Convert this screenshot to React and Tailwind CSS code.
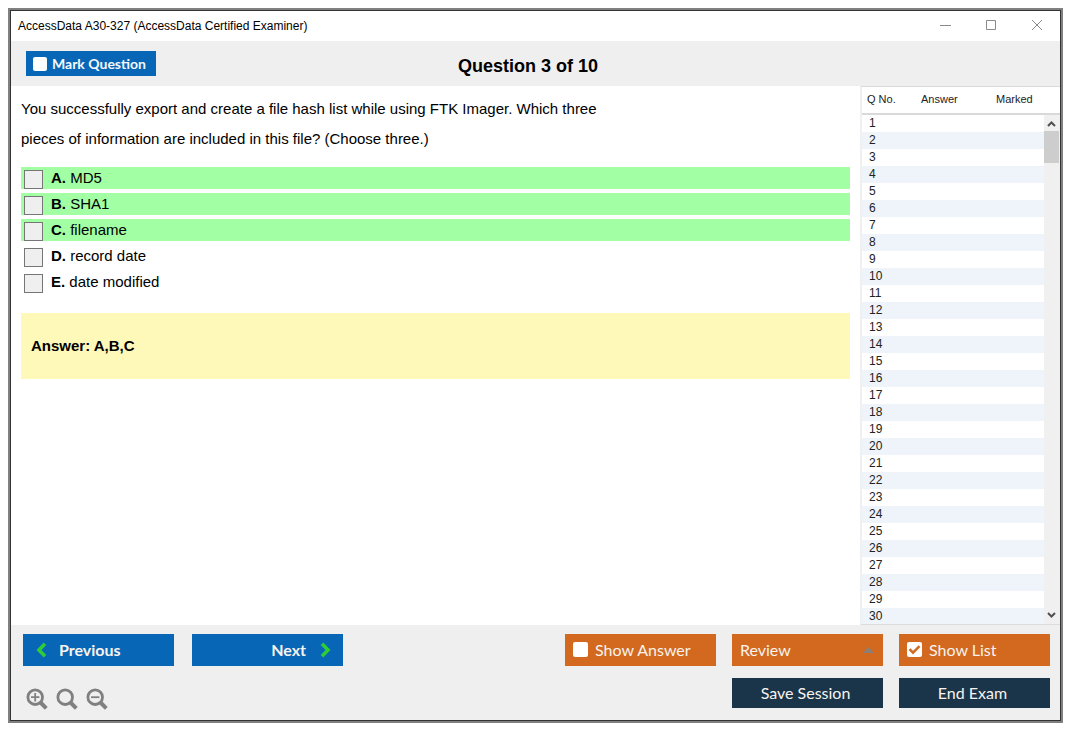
import React from "react";

const options = [
  { letter: "A", text: "MD5", correct: true },
  { letter: "B", text: "SHA1", correct: true },
  { letter: "C", text: "filename", correct: true },
  { letter: "D", text: "record date", correct: false },
  { letter: "E", text: "date modified", correct: false },
];

const rows = Array.from({ length: 30 }, (_, i) => i + 1);

function TitleBar() {
  return (
    <div className="flex h-[30px] shrink-0 items-center justify-between bg-white pr-[17px] pl-[7px]">
      <h1 className="text-[12px] leading-4">AccessData A30-327 (AccessData Certified Examiner)</h1>
      <div className="flex items-center gap-[34px] pb-px text-[#8a8a8a]">
        <button type="button" aria-label="Minimize">
          <svg className="block size-3" viewBox="0 0 12 12" fill="none" stroke="currentColor" aria-hidden="true">
            <path d="M1 5.5h11" />
          </svg>
        </button>
        <button type="button" aria-label="Maximize">
          <svg className="block size-3" viewBox="0 0 12 12" fill="none" stroke="currentColor" aria-hidden="true">
            <path d="M1.5 0.5h9v9h-9z" />
          </svg>
        </button>
        <button type="button" aria-label="Close">
          <svg className="block size-3" viewBox="0 0 12 12" fill="none" stroke="currentColor" aria-hidden="true">
            <path d="M1 0l10 10M11 0L1 10" />
          </svg>
        </button>
      </div>
    </div>
  );
}

function Tick({ checked = false, small = false }) {
  return (
    <span className={small ? "grid size-[14px]" : "mb-px grid size-[15px]"}>
      <input
        type="checkbox"
        defaultChecked={checked}
        className="peer col-start-1 row-start-1 size-full appearance-none rounded-[2px] bg-white"
      />
      <svg
        className="pointer-events-none invisible col-start-1 row-start-1 size-full text-[#d2691e] peer-checked:visible"
        viewBox="0 0 15 15"
        fill="none"
        stroke="currentColor"
        strokeWidth="2.4"
        aria-hidden="true"
      >
        <path d="M2.500 7.200l3.500 3.500 6.500-6.500" />
      </svg>
    </span>
  );
}

function QuestionList() {
  return (
    <aside className="flex w-[200px] shrink-0 overflow-hidden border-y border-b-[#dcdcdc] border-t-[#d9d9d9] border-l-2 border-l-[#f0f0f0] text-[12px] text-[#222]">
      <div className="min-w-0 flex-1 overflow-hidden">
        <table className="w-full table-fixed border-separate border-spacing-0 text-left">
          <thead>
            <tr className="h-[28px]">
              <th scope="col" className="w-[54px] border-b-2 border-[#d9d9d9] pb-[2px] pl-[5px] text-[11px] font-normal">Q No.</th>
              <th scope="col" className="w-[75px] border-b-2 border-[#d9d9d9] pb-[2px] pl-[5px] text-[11px] font-normal">Answer</th>
              <th scope="col" className="border-b-2 border-[#d9d9d9] pb-[2px] pl-[5px] text-[11px] font-normal">Marked</th>
            </tr>
          </thead>
          <tbody>
            {rows.map((n) => (
              <tr key={n} className="h-[17px] odd:bg-white even:bg-[#eef4f9]">
                <td className="pl-[7px] text-[12px] leading-[17px]">{n}</td>
                <td />
                <td />
              </tr>
            ))}
          </tbody>
        </table>
      </div>
      <div className="flex w-[16px] flex-col" aria-hidden="true">
        <div className="h-[28px] shrink-0 border-b-2 border-[#d9d9d9]" />
        <div className="flex min-h-0 flex-1 flex-col justify-between bg-[#f0f0f0]">
          <div>
            <svg className="h-4 w-[15px]" viewBox="0 0 15 16" fill="none" stroke="#505050" strokeWidth="2">
              <path d="M4 11l3.500-3.500L11 11" />
            </svg>
            <div className="h-8 w-[15px] bg-[#cdcdcd]" />
          </div>
          <svg className="h-4 w-[15px]" viewBox="0 0 15 16" fill="none" stroke="#505050" strokeWidth="2">
            <path d="M4 5l3.500 3.500L11 5" />
          </svg>
        </div>
      </div>
    </aside>
  );
}

function Magnifier({ label, d }) {
  return (
    <button type="button" aria-label={label}>
      <svg className="block size-[22px] text-[#808080]" viewBox="0 0 22 22" fill="none" stroke="currentColor" aria-hidden="true">
        <circle cx="9.2" cy="9.2" r="7.300" strokeWidth="2.800" />
        <path d="M14.500 14.500l5.800 5.800" strokeWidth="4" />
        <path d={d} strokeWidth="1.800" />
      </svg>
    </button>
  );
}

function Footer() {
  return (
    <footer className="flex shrink-0 justify-between bg-[#efefef] pt-[9px] pr-[10px] pb-[10px] pl-3 font-['Lato',sans-serif] text-[16px] leading-5 text-[#f7f3ee]">
      <div className="flex flex-col gap-[22px]">
        <div className="flex gap-[18px]">
          <button type="button" className="flex h-8 w-[151px] items-center gap-3 bg-[#0766b5] pl-[13px] font-bold">
            <svg className="h-4 w-[11px]" viewBox="0 0 11 16" fill="none" stroke="#2fcc38" strokeWidth="3.600" aria-hidden="true">
              <path d="M9 1.800L3 8 9 14.200" />
            </svg>
            Previous
          </button>
          <button type="button" className="flex h-8 w-[151px] items-center justify-end gap-[14px] bg-[#0766b5] pr-3 font-bold">
            Next
            <svg className="h-4 w-[11px]" viewBox="0 0 11 16" fill="none" stroke="#2fcc38" strokeWidth="3.600" aria-hidden="true">
              <path d="M2 1.800L8 8 2 14.200" />
            </svg>
          </button>
        </div>
        <div className="flex gap-2 pl-[3px]">
          <Magnifier label="Zoom in" d="M9.200 5v8.400M5 9.200h8.400" />
          <Magnifier label="Reset zoom" d="" />
          <Magnifier label="Zoom out" d="M5 9.200h8.400" />
        </div>
      </div>
      <div className="grid grid-cols-[151px_151px_151px] content-start gap-x-4 gap-y-3">
        <label className="flex h-8 items-center gap-[7px] bg-[#d2691e] pl-2">
          <Tick />
          Show Answer
        </label>
        <button type="button" className="flex h-8 items-center justify-between bg-[#d2691e] pr-[9px] pl-2">
          Review
          <svg className="h-[6px] w-[11px]" viewBox="0 0 11 6" fill="#8a8078" aria-hidden="true">
            <path d="M5.500 0L11 6H0z" />
          </svg>
        </button>
        <label className="flex h-8 items-center gap-[7px] bg-[#d2691e] pl-2">
          <Tick checked />
          Show List
        </label>
        <button type="button" className="col-start-2 h-[30px] bg-[#1a344a] pr-1">Save Session</button>
        <button type="button" className="h-[30px] bg-[#1a344a] pr-1">End Exam</button>
      </div>
    </footer>
  );
}

export default function App() {
  return (
    <div className="h-screen bg-white pt-2 pr-3 pb-3 pl-2 font-['Liberation_Sans',Arial,sans-serif] text-black">
      <div className="h-full border-2 border-[#808080]">
        <div className="flex h-full flex-col border border-[#333]">
          <TitleBar />
          <header className="grid h-[45px] shrink-0 grid-cols-[1fr_auto_1fr] items-center bg-[#efefef] pr-[30px] pl-[15px]">
            <label className="flex h-[25px] w-[130px] items-center gap-[5px] bg-[#0766b5] pl-[7px] font-['Lato',sans-serif] text-[14px] font-bold text-[#f4f8fc]">
              <Tick small />
              Mark Question
            </label>
            <h2 className="pt-1 text-[18px] leading-6 font-bold">Question 3 of 10</h2>
          </header>
          <div className="flex min-h-0 flex-1">
            <main className="min-w-0 flex-1 overflow-hidden pt-2 pr-[10px] pl-[10px] text-[15px]">
              <p className="max-w-[600px] leading-[30px]">
                You successfully export and create a file hash list while using FTK Imager. Which three pieces of
                information are included in this file? (Choose three.)
              </p>
              <ul className="mt-[13px] flex flex-col gap-1">
                {options.map((o) => (
                  <li key={o.letter} className={o.correct ? "bg-[#a3ffa3]" : "bg-white"}>
                    <label className="flex h-[22px] items-start gap-2 pl-[3px] leading-[22px]">
                      <input
                        type="checkbox"
                        className="mt-[3px] size-[19px] shrink-0 appearance-none border border-[#767676] bg-[#efefef] checked:bg-[#767676]"
                      />
                      <span>
                        <b>{o.letter}.</b> {o.text}
                      </span>
                    </label>
                  </li>
                ))}
              </ul>
              <div className="mt-5 bg-[#fef8b9] px-[10px] py-[23px] leading-5 font-bold">Answer: A,B,C</div>
            </main>
            <QuestionList />
          </div>
          <Footer />
        </div>
      </div>
    </div>
  );
}
